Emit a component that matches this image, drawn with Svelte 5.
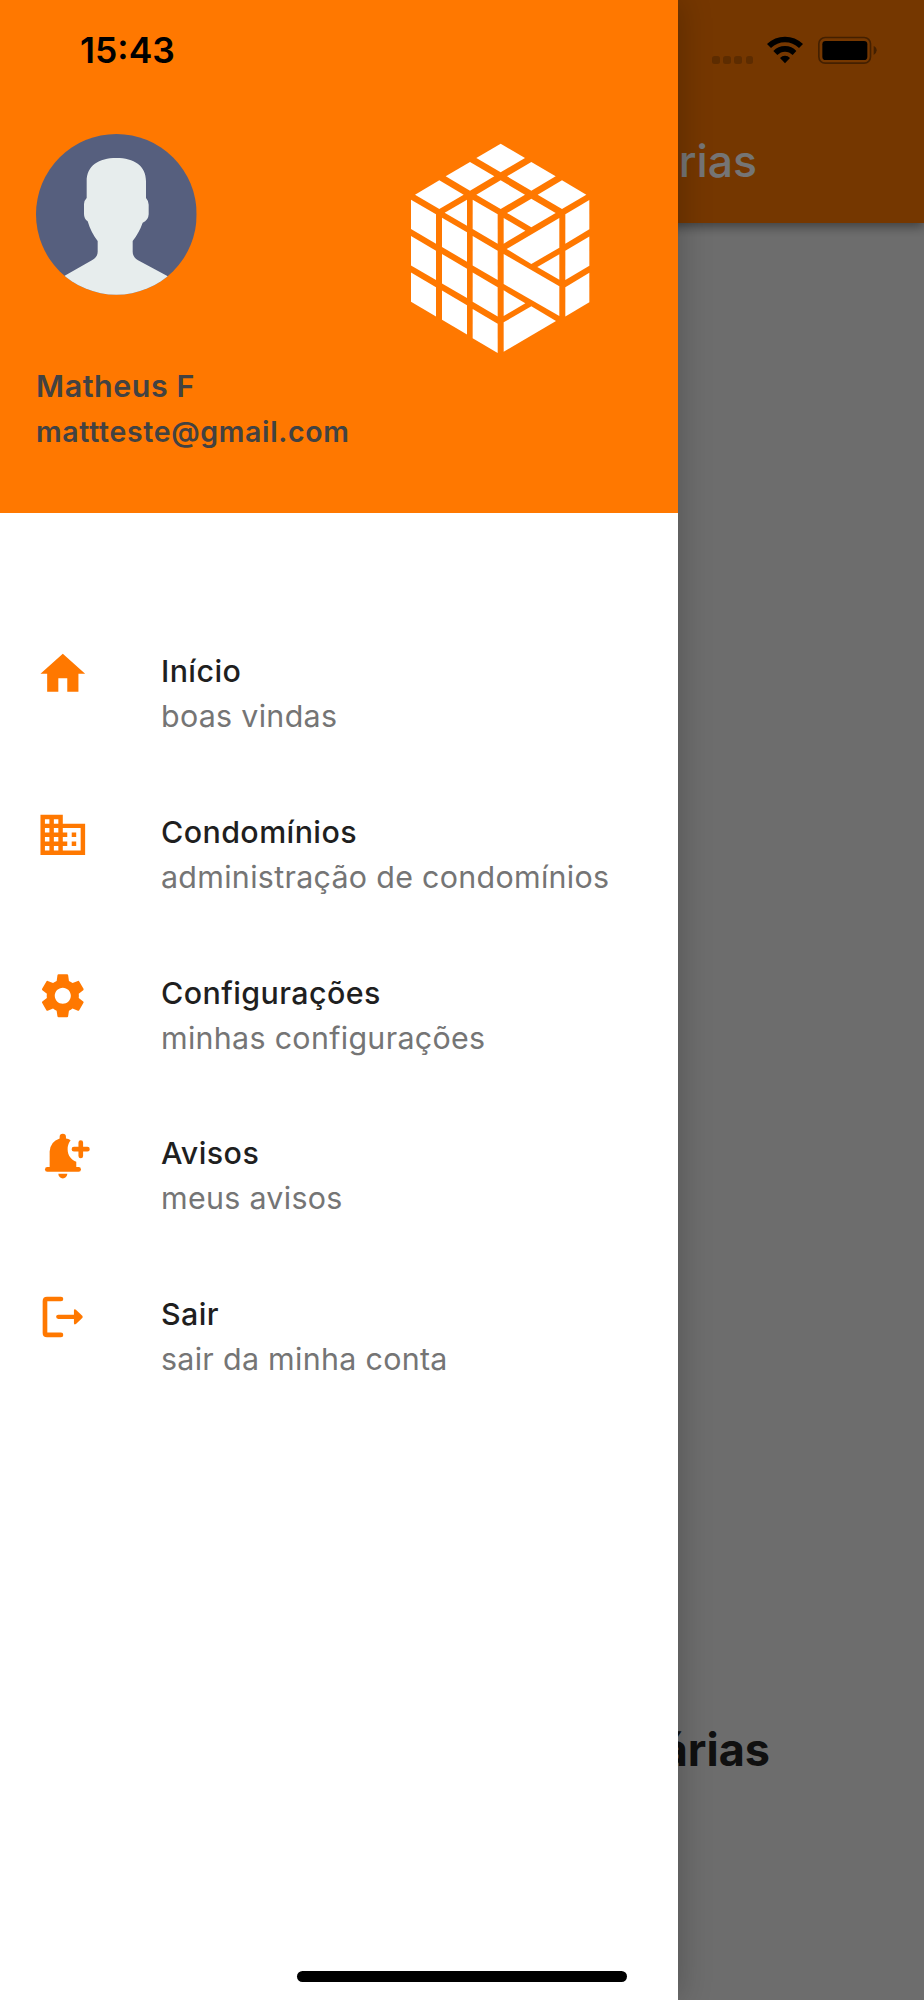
<script lang="ts">
  const menu = [
    { icon: 'home', title: 'Início', subtitle: 'boas vindas' },
    { icon: 'business', title: 'Condomínios', subtitle: 'administração de condomínios' },
    { icon: 'settings', title: 'Configurações', subtitle: 'minhas configurações' },
    { icon: 'alert', title: 'Avisos', subtitle: 'meus avisos' },
    { icon: 'logout', title: 'Sair', subtitle: 'sair da minha conta' },
  ];

  // Centres of the rhombi on the top face of the cube.
  const tops = [
    [332, 84],
    [240, 139],
    [424, 139],
    [148, 194],
    [332, 194],
    [516, 194],
    [424, 249],
  ];

  // Side tiles: left edge, width, y of the left corner, slant, how many stacked.
  const columns = [
    { x: 63, w: 75, y: 209, slant: 44, count: 3 },
    { x: 156, w: 75, y: 263, slant: 44, count: 3 },
    { x: 248, w: 75, y: 209, slant: 44, count: 4 },
    { x: 526, w: 72, y: 253, slant: -43, count: 3 },
  ];

  const tiles = columns.flatMap((c) =>
    Array.from({ length: c.count }, (_, i) => {
      const y = c.y + i * 109.3;
      return `M${c.x} ${y}l${c.w} ${c.slant}v88l${-c.w} ${-c.slant}z`;
    }),
  );
</script>

<div class="screen">
  <div class="page">
    <header class="appbar"><span class="appbar__title">rias</span></header>
    <main class="page__body"><h1>árias</h1></main>
  </div>
  <div class="scrim"></div>

  <aside class="drawer">
    <div class="profile">
      <div class="profile__top">
        <svg class="avatar" viewBox="108 402 482 482" aria-hidden="true">
          <defs>
            <clipPath id="avatar-clip"><circle cx="349" cy="643" r="241" /></clipPath>
          </defs>
          <g clip-path="url(#avatar-clip)">
            <path fill="#565f7e" d="M108 402h482v482H108z" />
            <path
              fill="#e7eded"
              d="M349 474C402 474 438 497 438 544V594Q446 603 446 614V643Q445 662 428 668Q418 697 398 723V755Q398 771 414 781L502 828L560 900H130L194 827L277 780Q293 771 293 755V723Q273 698 263 664Q252 656 252 642V612Q252 602 260 594V544C260 497 296 474 349 474Z"
            />
          </g>
        </svg>
        <svg class="logo" viewBox="0 0 660 720" aria-hidden="true">
          {#each tops as [x, y]}
            <path d="M{x - 73} {y}l73 -43 73 43 -73 43z" />
          {/each}
          {#each tiles as d}
            <path {d} />
          {/each}
          <path d="M164 248L231 209V287Z" />
          <path d="M341 264L406 302L341 341Z" />
          <path d="M350 357L508 264V353L424 402Z" />
          <path d="M442 411L508 373V449Z" />
          <path d="M341 372L508 469V558L341 462Z" />
          <path d="M341 481L406 520L341 558Z" />
          <path d="M341 577L424 529L498 573L341 665Z" />
        </svg>
      </div>
      <p class="profile__name">Matheus F</p>
      <p class="profile__email">mattteste@gmail.com</p>
    </div>

    <nav class="menu">
      {#each menu as item}
        <a class="item" href="#{item.icon}">
          {#if item.icon === 'home'}
            <svg class="icon" viewBox="0 0 24 24"><path d="M10 20v-6h4v6h5v-8h3L12 3 2 12h3v8z" /></svg>
          {:else if item.icon === 'business'}
            <svg class="icon" viewBox="0 0 24 24">
              <path
                d="M12 7V3H2v18h20V7H12zM6 19H4v-2h2v2zm0-4H4v-2h2v2zm0-4H4V9h2v2zm0-4H4V5h2v2zm4 12H8v-2h2v2zm0-4H8v-2h2v2zm0-4H8V9h2v2zm0-4H8V5h2v2zm10 12h-8v-2h2v-2h-2v-2h2v-2h-2V9h8v10zm-2-8h-2v2h2v-2zm0 4h-2v2h2v-2z"
              />
            </svg>
          {:else if item.icon === 'settings'}
            <svg class="icon" viewBox="0 0 24 24">
              <path
                d="M19.14 12.94c.04-.3.06-.61.06-.94 0-.32-.02-.64-.07-.94l2.03-1.58c.18-.14.23-.41.12-.61l-1.92-3.32c-.12-.22-.37-.29-.59-.22l-2.39.96c-.5-.38-1.03-.7-1.62-.94l-.36-2.54c-.04-.24-.24-.41-.48-.41h-3.84c-.24 0-.43.17-.47.41l-.36 2.54c-.59.24-1.13.57-1.62.94l-2.39-.96c-.22-.08-.47 0-.59.22L2.74 8.87c-.12.21-.08.47.12.61l2.03 1.58c-.05.3-.09.63-.09.94s.02.64.07.94l-2.03 1.58c-.18.14-.23.41-.12.61l1.92 3.32c.12.22.37.29.59.22l2.39-.96c.5.38 1.03.7 1.62.94l.36 2.54c.05.24.24.41.48.41h3.84c.24 0 .44-.17.47-.41l.36-2.54c.59-.24 1.13-.56 1.62-.94l2.39.96c.22.08.47 0 .59-.22l1.92-3.32c.12-.22.07-.47-.12-.61l-2.01-1.58zM12 15.6c-1.98 0-3.6-1.62-3.6-3.6s1.62-3.6 3.6-3.6 3.6 1.62 3.6 3.6-1.62 3.6-3.6 3.6z"
              />
            </svg>
          {:else if item.icon === 'alert'}
            <svg class="icon" viewBox="47 57.5 161 161">
              <rect x="74" y="172" width="108" height="14" rx="7" />
              <path
                d="M88 176V125Q90 95 118 86V81a9.5 9.5 0 0 1 19 0V86Q145 87 151 91Q142 102 142 118C142 138 154 150 168 156V176Z"
              />
              <path d="M114 192h27a13.5 14 0 0 1-27 0z" />
              <path class="stroke" stroke-width="14" d="M161 118h40.500M181.500 98v40.500" />
            </svg>
          {:else}
            <svg class="icon" viewBox="47 60 161 161">
              <path class="stroke" stroke-width="14" d="M122 87H80Q74 87 74 93V189Q74 195 80 195H122" />
              <path class="stroke" stroke-width="13" d="M114 140.500H164" />
              <path d="M161 122Q161 115 167 119L186 137Q189 140.500 186 144L167 162Q161 166 161 159Z" />
            </svg>
          {/if}
          <span class="item__text">
            <span class="item__title">{item.title}</span>
            <span class="item__subtitle">{item.subtitle}</span>
          </span>
        </a>
      {/each}
    </nav>
  </aside>

  <div class="status">
    <span class="status__time">15:43</span>
    <span class="status__dots"><i></i><i></i><i></i><i></i></span>
    <svg class="status__wifi" viewBox="322 108 108 84" aria-hidden="true">
      <path d="M322 132Q345 110 376 110T430 132L418 144Q400 127 376 127T334 144Z" />
      <path d="M341 153Q355 138 376 138T410 153L399 165Q389 155 376 155T353 165Z" />
      <path d="M361 174Q367 167 376 167T391 174L376 190Z" />
    </svg>
    <svg class="status__battery" viewBox="473 108 177 84" aria-hidden="true">
      <rect x="475.500" y="112.500" width="155" height="77" rx="19" fill="none" stroke="#000" stroke-opacity=".42" stroke-width="5" />
      <rect x="486" y="123" width="135" height="57" rx="10" />
      <path fill-opacity=".42" d="M640 138Q649 142 649 151T640 165Z" />
    </svg>
  </div>

  <div class="indicator"></div>
</div>

<style>
  :global(body) {
    margin: 0;
    background: #6d6d6d;
  }

  .screen {
    position: relative;
    width: 924px;
    height: 2000px;
    overflow: hidden;
    font-family: Inter, 'Liberation Sans', sans-serif;
  }

  .page {
    display: flex;
    flex-direction: column;
    height: 100%;
    background: #eeeeee;
  }

  .appbar {
    display: flex;
    justify-content: flex-end;
    box-sizing: border-box;
    height: 223px;
    padding: 134px 167px 0 0;
    background: #ff7800;
    box-shadow: 0 4px 10px rgba(0, 0, 0, 0.4);
  }

  .appbar__title {
    font-size: 44.500px;
    font-weight: 500;
    line-height: 54px;
    color: #fff;
  }

  .page__body {
    display: flex;
    flex: 1;
    align-items: flex-end;
    justify-content: flex-end;
    padding: 0 154px 223px 0;
  }

  h1 {
    margin: 0;
    font-size: 45px;
    font-weight: 700;
    line-height: 54px;
    color: #242424;
  }

  .scrim {
    position: absolute;
    inset: 0;
    background: rgba(0, 0, 0, 0.54);
  }

  .drawer {
    position: absolute;
    inset: 0 auto 0 0;
    width: 678px;
    background: #fff;
    box-shadow: 2px 0 30px rgba(0, 0, 0, 0.22);
  }

  .profile {
    box-sizing: border-box;
    height: 513.300px;
    padding: 130px 0 0 36px;
    background: #ff7800;
    color: #424242;
  }

  .profile__top {
    display: flex;
    height: 234px;
  }

  .avatar {
    width: 160.700px;
    height: 160.700px;
    margin-top: 4px;
  }

  .logo {
    width: 220px;
    height: 240px;
    margin-left: 193.300px;
    fill: #fff;
  }

  .profile p {
    margin: 0;
    font-weight: 600;
    line-height: 45px;
    white-space: nowrap;
  }

  .profile__name {
    font-size: 30.400px;
    letter-spacing: 0.600px;
  }

  .profile__email {
    font-size: 28.500px;
    letter-spacing: 0.650px;
  }

  .menu {
    display: flex;
    flex-direction: column;
    gap: 70.700px;
    padding: 134px 0 0 35.700px;
  }

  .item {
    display: flex;
    height: 90px;
    color: inherit;
    text-decoration: none;
  }

  .icon {
    width: 53.600px;
    height: 53.600px;
    margin-right: 71.700px;
    fill: #ff7800;
    overflow: visible;
  }

  .stroke {
    fill: none;
    stroke: #ff7800;
    stroke-linecap: round;
  }

  .item__text {
    display: flex;
    flex-direction: column;
    padding-top: 2px;
    font-size: 30.400px;
    line-height: 45px;
    white-space: nowrap;
  }

  .item__title {
    font-weight: 500;
    letter-spacing: 0.420px;
    color: #1f1f1f;
  }

  .item__subtitle {
    letter-spacing: 0.310px;
    color: #757575;
  }

  .status {
    position: absolute;
    inset: 0 0 auto 0;
    display: flex;
    align-items: flex-start;
    height: 100px;
  }

  .status__time {
    width: 632px;
    padding: 29px 0 0 80px;
    font-size: 35.500px;
    font-weight: 600;
    line-height: 43px;
  }

  .status__dots {
    display: flex;
    gap: 3.700px;
    width: 55px;
    padding-top: 56px;
  }

  .status__dots i {
    width: 7.500px;
    height: 7.500px;
    border-radius: 2.500px;
    background: rgba(0, 0, 0, 0.2);
  }

  .status__wifi {
    width: 36px;
    height: 28px;
    margin: 36px 14.700px 0 0;
  }

  .status__battery {
    width: 59px;
    height: 28px;
    margin-top: 36px;
  }

  .indicator {
    position: absolute;
    bottom: 18px;
    left: 297px;
    width: 330px;
    height: 11px;
    border-radius: 6px;
    background: #000;
  }
</style>
